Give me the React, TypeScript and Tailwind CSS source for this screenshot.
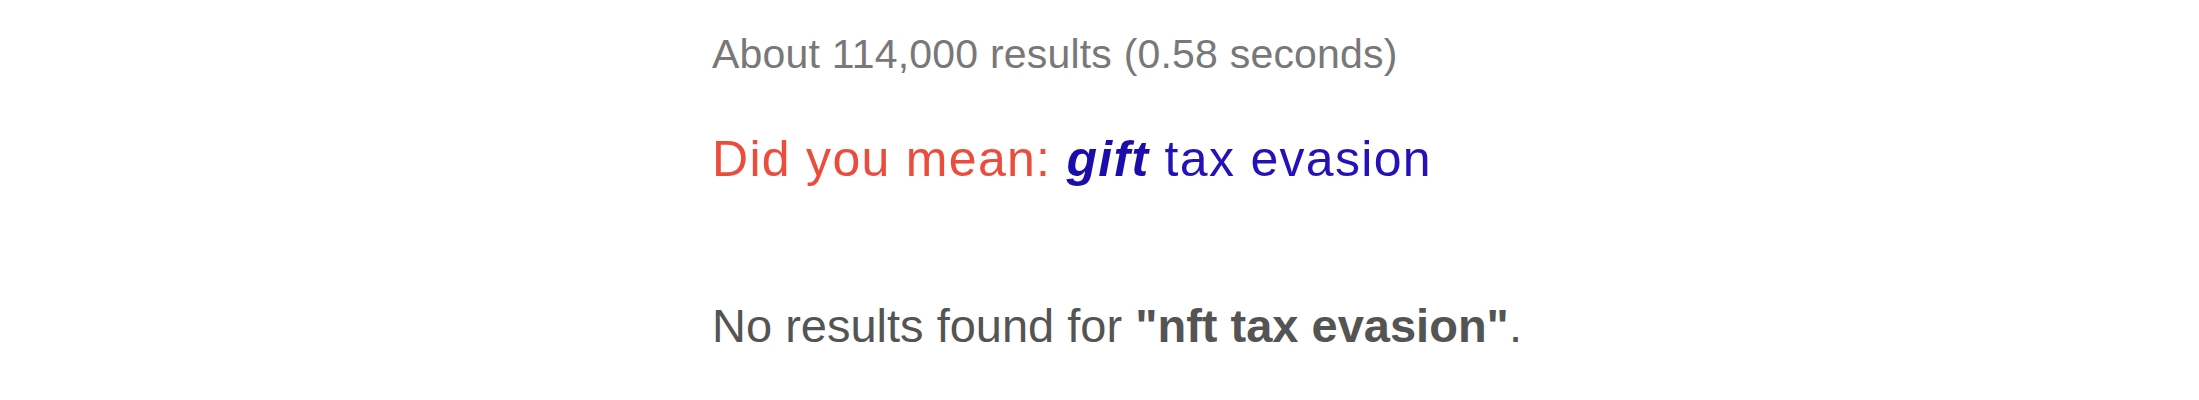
export default function App() {
  return (
    <div className="min-h-[400px] w-full bg-white font-['Liberation_Sans',Arial,sans-serif]">
      <div className="pl-[712px] pt-[30px]">
        <div className="text-[41px] leading-[48px] tracking-[0.2px] text-[#787878]">
          About 114,000 results (0.58 seconds)
        </div>
        <div className="mt-[51px] text-[50px] leading-[60px] tracking-[1.3px]">
          <span className="text-[#ec4c3c]">Did you mean: </span>
          <a className="text-[#2511b8]" href="#">
            <b className="italic font-bold text-[#1a0dab]">gift</b> tax evasion
          </a>
        </div>
        <div className="mt-[107px] text-[47px] leading-[60px] text-[#545454]">
          No results found for <b className="font-bold">"nft tax evasion"</b>.
        </div>
      </div>
    </div>
  );
}
